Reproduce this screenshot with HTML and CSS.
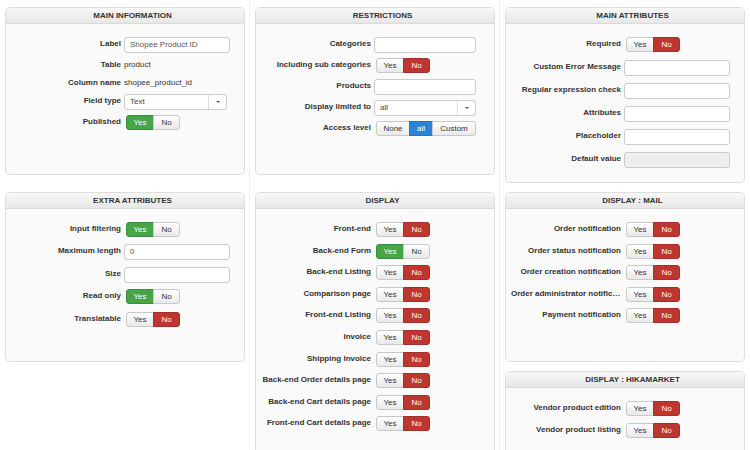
FILE: index.html
```html
<!DOCTYPE html>
<html>
<head>
<meta charset="utf-8">
<title>Field</title>
<link rel="stylesheet" href="styles.css">
</head>
<body>
<div class="page">
  <!-- Row 1 -->
  <div class="panel h-168">
    <div class="panel-head">Main information</div>
    <div class="panel-body">
      <div class="row"><div class="lbl">Label</div><div class="input">Shopee Product ID</div></div>
      <div class="row row-text"><div class="lbl">Table</div><div class="val">product</div></div>
      <div class="row row-text"><div class="lbl">Column name</div><div class="val">shopee_product_id</div></div>
      <div class="row"><div class="lbl">Field type</div><div class="select sel-sm"><span class="sel-text">Text</span><span class="sel-btn"><i class="caret"></i></span></div></div>
      <div class="row"><div class="lbl">Published</div><div class="toggle"><span class="yes on">Yes</span><span class="no">No</span></div></div>
    </div>
  </div>

  <div class="panel h-168">
    <div class="panel-head">Restrictions</div>
    <div class="panel-body gap-5">
      <div class="row"><div class="lbl">Categories</div><div class="input in-sm"></div></div>
      <div class="row"><div class="lbl">Including sub categories</div><div class="toggle"><span class="yes">Yes</span><span class="no on">No</span></div></div>
      <div class="row"><div class="lbl">Products</div><div class="input in-sm"></div></div>
      <div class="row"><div class="lbl">Display limited to</div><div class="select sel-wide"><span class="sel-text">all</span><span class="sel-btn"><i class="caret"></i></span></div></div>
      <div class="row"><div class="lbl">Access level</div><div class="toggle"><span class="none">None</span><span class="all on">all</span><span class="custom">Custom</span></div></div>
    </div>
  </div>

  <div class="panel h-176">
    <div class="panel-head">Main attributes</div>
    <div class="panel-body gap-7">
      <div class="row"><div class="lbl">Required</div><div class="toggle"><span class="yes">Yes</span><span class="no on">No</span></div></div>
      <div class="row"><div class="lbl">Custom Error Message</div><div class="input"></div></div>
      <div class="row"><div class="lbl">Regular expression check</div><div class="input"></div></div>
      <div class="row"><div class="lbl">Attributes</div><div class="input"></div></div>
      <div class="row"><div class="lbl">Placeholder</div><div class="input"></div></div>
      <div class="row"><div class="lbl">Default value</div><div class="input disabled"></div></div>
    </div>
  </div>

  <!-- Row 2 -->
  <div class="panel h-170">
    <div class="panel-head">Extra attributes</div>
    <div class="panel-body gap-6">
      <div class="row"><div class="lbl">Input filtering</div><div class="toggle"><span class="yes on">Yes</span><span class="no">No</span></div></div>
      <div class="row"><div class="lbl">Maximum length</div><div class="input">0</div></div>
      <div class="row"><div class="lbl">Size</div><div class="input"></div></div>
      <div class="row"><div class="lbl">Read only</div><div class="toggle"><span class="yes on">Yes</span><span class="no">No</span></div></div>
      <div class="row"><div class="lbl">Translatable</div><div class="toggle"><span class="yes">Yes</span><span class="no on">No</span></div></div>
    </div>
  </div>

  <div class="panel h-262">
    <div class="panel-head">Display</div>
    <div class="panel-body gap-55">
      <div class="row"><div class="lbl">Front-end</div><div class="toggle"><span class="yes">Yes</span><span class="no on">No</span></div></div>
      <div class="row"><div class="lbl">Back-end Form</div><div class="toggle"><span class="yes on">Yes</span><span class="no">No</span></div></div>
      <div class="row"><div class="lbl">Back-end Listing</div><div class="toggle"><span class="yes">Yes</span><span class="no on">No</span></div></div>
      <div class="row"><div class="lbl">Comparison page</div><div class="toggle"><span class="yes">Yes</span><span class="no on">No</span></div></div>
      <div class="row"><div class="lbl">Front-end Listing</div><div class="toggle"><span class="yes">Yes</span><span class="no on">No</span></div></div>
      <div class="row"><div class="lbl">Invoice</div><div class="toggle"><span class="yes">Yes</span><span class="no on">No</span></div></div>
      <div class="row"><div class="lbl">Shipping Invoice</div><div class="toggle"><span class="yes">Yes</span><span class="no on">No</span></div></div>
      <div class="row"><div class="lbl">Back-end Order details page</div><div class="toggle"><span class="yes">Yes</span><span class="no on">No</span></div></div>
      <div class="row"><div class="lbl">Back-end Cart details page</div><div class="toggle"><span class="yes">Yes</span><span class="no on">No</span></div></div>
      <div class="row"><div class="lbl">Front-end Cart details page</div><div class="toggle"><span class="yes">Yes</span><span class="no on">No</span></div></div>
    </div>
  </div>

  <div class="stack">
    <div class="panel h-170">
      <div class="panel-head">Display : Mail</div>
      <div class="panel-body gap-55">
        <div class="row"><div class="lbl">Order notification</div><div class="toggle"><span class="yes">Yes</span><span class="no on">No</span></div></div>
        <div class="row"><div class="lbl">Order status notification</div><div class="toggle"><span class="yes">Yes</span><span class="no on">No</span></div></div>
        <div class="row"><div class="lbl">Order creation notification</div><div class="toggle"><span class="yes">Yes</span><span class="no on">No</span></div></div>
        <div class="row"><div class="lbl">Order administrator notification</div><div class="toggle"><span class="yes">Yes</span><span class="no on">No</span></div></div>
        <div class="row"><div class="lbl">Payment notification</div><div class="toggle"><span class="yes">Yes</span><span class="no on">No</span></div></div>
      </div>
    </div>
    <div class="panel h-90">
      <div class="panel-head">Display : HikaMarket</div>
      <div class="panel-body gap-55">
        <div class="row"><div class="lbl">Vendor product edition</div><div class="toggle"><span class="yes">Yes</span><span class="no on">No</span></div></div>
        <div class="row"><div class="lbl">Vendor product listing</div><div class="toggle"><span class="yes">Yes</span><span class="no on">No</span></div></div>
      </div>
    </div>
  </div>
</div>
</body>
</html>
```

FILE: styles.css
```css
* { box-sizing: border-box; }

html, body {
  margin: 0;
  padding: 0;
  background: #ffffff;
}

body {
  font-family: "Liberation Sans", Arial, sans-serif;
  font-size: 8px;
  color: #333333;
  overflow: hidden;
  height: 450px;
}

.page {
  display: grid;
  grid-template-columns: repeat(3, 250px);
  row-gap: 9px;
  align-items: start;
  padding-top: 7px;
  min-height: 450px;
  background-image: linear-gradient(#efefef, #efefef), linear-gradient(#efefef, #efefef);
  background-size: 1px 100%, 1px 100%;
  background-position: 249px 0, 499px 0;
  background-repeat: no-repeat;
}

.stack {
  display: flex;
  flex-direction: column;
  gap: 9px;
}

.panel {
  margin: 0 5px;
  border: 1px solid #dddddd;
  border-radius: 5px;
  background: #fafafa;
  overflow: hidden;
}

.h-168 { height: 168px; }
.h-176 { height: 176px; }
.h-170 { height: 170px; }
.h-262 { height: 262px; }
.h-90 { height: 90px; }

.panel-head {
  height: 16px;
  line-height: 15px;
  padding-left: 15px;
  text-align: center;
  font-weight: bold;
  text-transform: uppercase;
  color: #333333;
  background: linear-gradient(#f8f8f8, #e7e7e7);
  border-bottom: 1px solid #dadada;
}

.panel-body {
  display: flex;
  flex-direction: column;
  gap: 5px;
  padding-top: 13px;
}

.gap-5 { gap: 5px; }
.gap-55 { gap: 5.6px; }
.gap-6 { gap: 6.4px; }
.gap-7 { gap: 7px; }

.row {
  display: flex;
  align-items: flex-start;
  height: 16px;
}

.row-text { height: 13px; }

.lbl {
  width: 110px;
  margin-left: 5px;
  flex: none;
  text-align: right;
  font-weight: bold;
  line-height: 13px;
  white-space: nowrap;
  overflow: hidden;
  text-overflow: ellipsis;
  color: #333333;
}

.val {
  margin-left: 3px;
  line-height: 13px;
  color: #333333;
}

.input {
  margin-left: 3px;
  width: 106px;
  height: 16px;
  border: 1px solid #cccccc;
  border-radius: 3px;
  background: #ffffff;
  padding: 0 5px;
  line-height: 14px;
  color: #555555;
}

.in-sm { width: 102px; }

.input.disabled {
  background: #eeeeee;
}

.select {
  margin-left: 3px;
  height: 16px;
  border: 1px solid #cccccc;
  border-radius: 3px;
  background: #ffffff;
  display: flex;
  color: #444444;
}

.sel-sm { width: 103px; }
.sel-wide { width: 102px; }

.sel-text {
  flex: 1;
  padding-left: 5px;
  line-height: 14px;
}

.sel-btn {
  width: 18px;
  border-left: 1px solid #dddddd;
  display: flex;
  align-items: center;
  justify-content: center;
}

.caret {
  width: 0;
  height: 0;
  border-left: 2px solid transparent;
  border-right: 2px solid transparent;
  border-top: 2px solid #555555;
}

.toggle {
  display: flex;
  margin-left: 5px;
  height: 15px;
}

.toggle span {
  display: block;
  height: 15px;
  line-height: 13px;
  text-align: center;
  border: 1px solid #c8c8c8;
  background: linear-gradient(#ffffff, #e9e9e9);
  color: #333333;
}

.toggle span + span { margin-left: -1px; }
.toggle span:first-child { border-radius: 3px 0 0 3px; }
.toggle span:last-child { border-radius: 0 3px 3px 0; }

.yes { width: 28px; }
.no { width: 27px; }
.none { width: 34px; }
.all { width: 24px; }
.custom { width: 44px; }

.toggle .yes.on {
  background: #46a546;
  border-color: #3b8e3b;
  color: #ffffff;
}

.toggle .no.on {
  background: #bd362f;
  border-color: #a52f29;
  color: #ffffff;
}

.toggle .all.on {
  background: #2f83d5;
  border-color: #2873bd;
  color: #ffffff;
}
```
